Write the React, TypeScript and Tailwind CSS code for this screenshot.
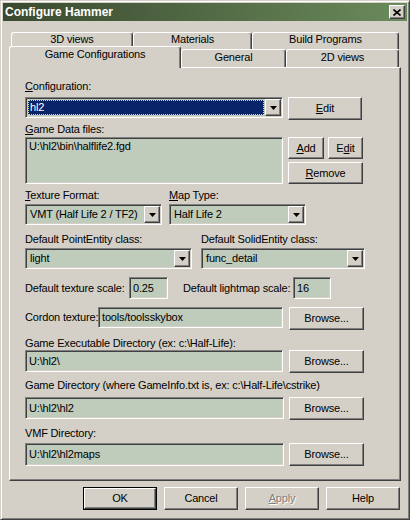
import React from 'react';

const raised =
  'border border-t-white border-l-white border-r-[#404040] border-b-[#404040] shadow-[inset_-1px_-1px_0_#808080] bg-[#d4d0c8]';
const sunken =
  'border border-t-[#808080] border-l-[#808080] border-r-white border-b-white shadow-[inset_1px_1px_0_#404040,inset_-1px_-1px_0_#d4d0c8]';

const U: React.FC<{ children: React.ReactNode }> = ({ children }) => <span className="underline">{children}</span>;

const Button: React.FC<{
  className?: string;
  disabled?: boolean;
  isDefault?: boolean;
  children: React.ReactNode;
}> = ({ className = '', disabled, isDefault, children }) => {
  const label = (
    <span className={disabled ? 'text-[#808080] [text-shadow:1px_1px_0_white]' : 'text-black'}>{children}</span>
  );
  if (isDefault) {
    return (
      <div className={`border border-black flex ${className}`}>
        <div className={`${raised} flex-1 flex items-center justify-center`}>{label}</div>
      </div>
    );
  }
  return <div className={`${raised} flex items-center justify-center ${className}`}>{label}</div>;
};

const Arrow = () => (
  <div className={`${raised} w-[16px] h-full flex items-center justify-center shrink-0`}>
    <svg width="7" height="4" viewBox="0 0 7 4">
      <polygon points="0,0 7,0 3.5,4" fill="black" />
    </svg>
  </div>
);

const Combo: React.FC<{ className?: string; value: string; selected?: boolean }> = ({
  className = '',
  value,
  selected,
}) => (
  <div className={`${sunken} bg-[#bfcbbb] flex p-[1px] ${className}`}>
    <div className="flex-1 flex items-center pl-[1px] pr-[1px]">
      {selected ? (
        <div className="w-full h-[15px] bg-[#0a246a] text-white border border-dotted border-[#e0d890] leading-[13px] pl-[1px]">
          {value}
        </div>
      ) : (
        <div className="pl-[2px] leading-[13px]">{value}</div>
      )}
    </div>
    <Arrow />
  </div>
);

const Field: React.FC<{ className?: string; value: string }> = ({ className = '', value }) => (
  <div className={`${sunken} bg-[#bfcbbb] flex items-center pl-[3px] leading-[13px] shrink-0 ${className}`}>
    {value}
  </div>
);

const Label: React.FC<{ className?: string; children: React.ReactNode }> = ({ className = '', children }) => (
  <div className={`h-[13px] leading-[13px] whitespace-nowrap ${className}`}>{children}</div>
);

const Tab: React.FC<{ className?: string; children: React.ReactNode }> = ({ className = '', children }) => (
  <div
    className={`bg-[#d4d0c8] border-t border-l border-r border-t-white border-l-white border-r-[#404040] shadow-[inset_-1px_0_0_#808080] rounded-t-[3px] flex justify-center leading-[13px] ${className}`}
  >
    {children}
  </div>
);

export default function App() {
  return (
    <div className="w-[410px] h-[520px] bg-[#d4d0c8] border border-t-[#d4d0c8] border-l-[#d4d0c8] border-r-[#404040] border-b-[#404040] shadow-[inset_1px_1px_0_white,inset_-1px_-1px_0_#808080] p-[2px] font-['Liberation_Sans',Arial,sans-serif] text-[11px] tracking-[-0.17px] text-black select-none">
      {/* title bar */}
      <div className="h-[18px] bg-linear-to-r from-[#3a4a30] to-[#6b8b5b] flex items-center justify-between pl-[2px] pr-[2px]">
        <span className="text-white font-bold text-[12px] leading-[14px] tracking-normal">Configure Hammer</span>
        <div className={`${raised} w-[16px] h-[14px] flex items-center justify-center`}>
          <svg width="8" height="7" viewBox="0 0 8 7">
            <path d="M0.5 0.5 L7.5 6.5 M7.5 0.5 L0.5 6.5" stroke="black" strokeWidth="1.6" />
          </svg>
        </div>
      </div>

      <div className="pl-[6px] pt-[11px]">
        {/* tabs */}
        <div className="flex h-[17px] pl-[2px]">
          <Tab className="w-[122px] h-[17px]">3D views</Tab>
          <Tab className="w-[119px] h-[17px]">Materials</Tab>
          <Tab className="w-[147px] h-[17px]">Build Programs</Tab>
        </div>
        <div className="flex h-[18px] items-end">
          <Tab className="relative z-10 w-[172px] h-[22px] -mb-[1px] pt-[1px]">Game Configurations</Tab>
          <Tab className="w-[105px] h-[18px] pt-[1px]">General</Tab>
          <Tab className="w-[113px] h-[18px] pt-[1px]">2D views</Tab>
        </div>

        {/* panel */}
        <div className="w-[392px] h-[414px] border border-t-white border-l-white border-r-[#404040] border-b-[#404040] shadow-[inset_-1px_-1px_0_#808080] pl-[15px]">
          <Label className="mt-[12px]">
            <U>C</U>onfiguration:
          </Label>
          <div className="flex mt-[4px] h-[23px]">
            <Combo className="w-[258px] h-[21px]" value="hl2" selected />
            <Button className="w-[74px] h-[23px] ml-[5px]">
              <U>E</U>dit
            </Button>
          </div>

          <Label className="mt-[3px]">
            <U>G</U>ame Data files:
          </Label>
          <div className="flex mt-[1px] h-[48px]">
            <div className={`${sunken} bg-[#bfcbbb] w-[258px] h-[47px] pl-[3px] pt-[2px] leading-[13px]`}>
              U:\hl2\bin\halflife2.fgd
            </div>
            <div className="ml-[5px] flex flex-col gap-[3px]">
              <div className="flex gap-[4px]">
                <Button className="w-[36px] h-[22px]">
                  <U>A</U>dd
                </Button>
                <Button className="w-[35px] h-[22px]">
                  E<U>d</U>it
                </Button>
              </div>
              <Button className="w-[75px] h-[22px]">
                <U>R</U>emove
              </Button>
            </div>
          </div>

          <div className="flex mt-[4px]">
            <Label className="w-[144px]">
              <U>T</U>exture Format:
            </Label>
            <Label>
              <U>M</U>ap Type:
            </Label>
          </div>
          <div className="flex mt-[2px] gap-[7px]">
            <Combo className="w-[137px] h-[21px]" value="VMT (Half Life 2 / TF2)" />
            <Combo className="w-[137px] h-[21px]" value="Half Life 2" />
          </div>

          <div className="flex mt-[8px]">
            <Label className="w-[176px]">Default PointEntity class:</Label>
            <Label>Default SolidEntity class:</Label>
          </div>
          <div className="flex mt-[2px] gap-[9px]">
            <Combo className="w-[167px] h-[21px]" value="light" />
            <Combo className="w-[164px] h-[21px]" value="func_detail" />
          </div>

          <div className="flex items-center mt-[8px] h-[22px]">
            <Label className="w-[104px]">Default texture scale:</Label>
            <Field className="w-[39px] h-[22px]" value="0.25" />
            <Label className="ml-[15px] w-[110px]">Default lightmap scale:</Label>
            <Field className="w-[38px] h-[22px]" value="16" />
          </div>

          <div className="flex items-start mt-[8px] h-[23px]">
            <Label className="w-[73px] mt-[4px]">Cordon texture:</Label>
            <Field className="w-[185px] h-[21px]" value="tools/toolsskybox" />
            <Button className="w-[75px] h-[23px] ml-[6px]">Browse...</Button>
          </div>

          <Label className="mt-[7px]">Game Executable Directory (ex: c:\Half-Life):</Label>
          <div className="flex items-start h-[23px]">
            <Field className="w-[258px] h-[22px]" value="U:\hl2\" />
            <Button className="w-[75px] h-[23px] ml-[6px]">Browse...</Button>
          </div>

          <Label className="mt-[6px]">Game Directory (where GameInfo.txt is, ex: c:\Half-Life\cstrike)</Label>
          <div className="flex items-start mt-[5px] h-[23px]">
            <Field className="w-[259px] h-[22px]" value="U:\hl2\hl2" />
            <Button className="w-[75px] h-[23px] ml-[5px]">Browse...</Button>
          </div>

          <Label className="mt-[7px]">VMF Directory:</Label>
          <div className="flex items-start mt-[3px] h-[23px]">
            <Field className="w-[259px] h-[23px]" value="U:\hl2\hl2maps" />
            <Button className="w-[75px] h-[23px] ml-[5px]">Browse...</Button>
          </div>
        </div>

        {/* footer */}
        <div className="w-[392px] flex justify-end gap-[7px] mt-[6px] pr-[1px]">
          <Button className="w-[74px] h-[23px]" isDefault>
            OK
          </Button>
          <Button className="w-[74px] h-[23px]">Cancel</Button>
          <Button className="w-[74px] h-[23px]" disabled>
            <U>A</U>pply
          </Button>
          <Button className="w-[74px] h-[23px]">Help</Button>
        </div>
      </div>
    </div>
  );
}
